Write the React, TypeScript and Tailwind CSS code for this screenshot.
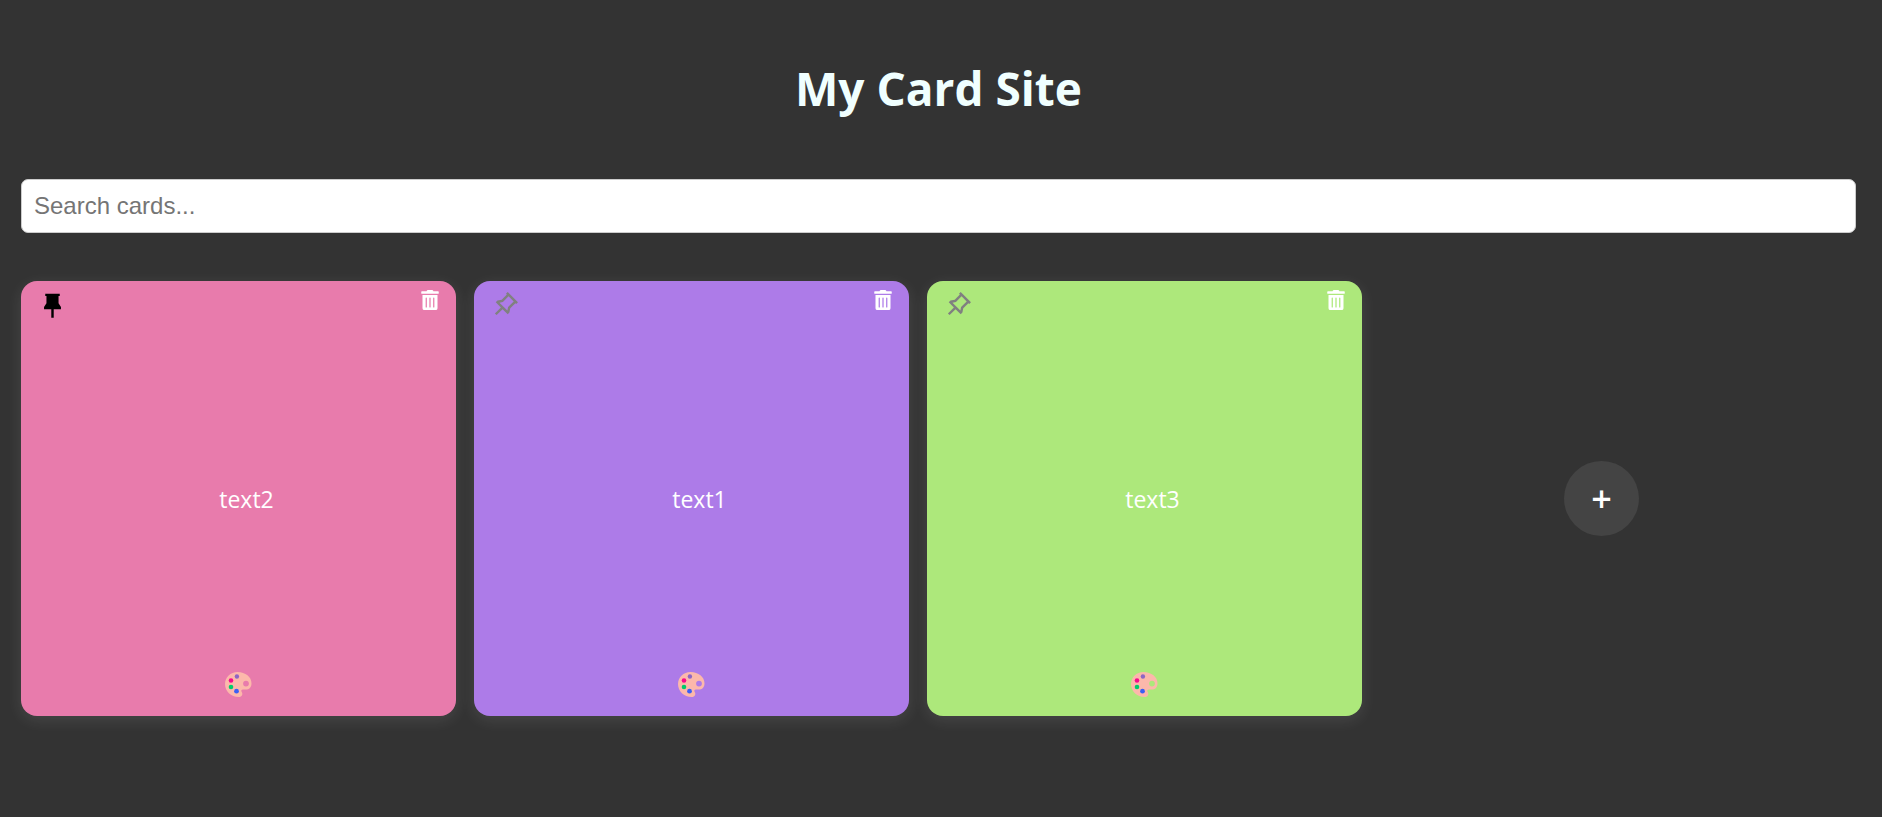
import { FaTrashAlt } from "react-icons/fa";
import { RiPushpin2Fill, RiPushpinLine } from "react-icons/ri";

type Card = { id: number; text: string; color: string; pinned: boolean };

const cards: Card[] = [
  { id: 2, text: "text2", color: "bg-[#e87bac]", pinned: true },
  { id: 1, text: "text1", color: "bg-[#ad7be8]", pinned: false },
  { id: 3, text: "text3", color: "bg-[#ade87b]", pinned: false },
];

function Palette() {
  return (
    <svg viewBox="0 0 30 30" className="size-[30px]" aria-hidden="true">
      <path
        fill="#fcb8ab"
        fillRule="evenodd"
        d="M14.5 2C22.5 2 28.500 7 28.500 13.200C28.500 17.300 26.300 19.600 22.600 19.600H20C18.300 19.600 17.900 20.800 18.700 22C20.200 24.300 19 27 15.800 27C7.800 27 2 21 2 14C2 7 7.500 2 14.500 2ZM23 10.700a2.900 2.900 0 1 0 0 5.800a2.900 2.900 0 1 0 0-5.800Z"
      />
      <circle cx="13.900" cy="6.500" r="2.200" fill="#8d65c5" />
      <circle cx="8" cy="10.500" r="2.300" fill="#f70a8d" />
      <circle cx="8" cy="17" r="2.300" fill="#00cc6a" />
      <circle cx="13.500" cy="21.200" r="2.400" fill="#3b5ff5" />
    </svg>
  );
}

function CardTile({ card }: { card: Card }) {
  return (
    <article
      className={`flex aspect-square flex-col rounded-2xl text-white shadow-[0_4px_16px_rgba(255,255,255,0.1)] ${card.color}`}
    >
      <div className="flex h-12 items-start justify-between pt-[9px] pr-4 pl-[17px]">
        <button
          type="button"
          aria-label={card.pinned ? "Unpin card" : "Pin card"}
          className={card.pinned ? "text-black" : "text-[#808080]"}
        >
          {card.pinned ? <RiPushpin2Fill size={29} /> : <RiPushpinLine size={29} />}
        </button>
        <button type="button" aria-label="Delete card">
          <FaTrashAlt size={20} />
        </button>
      </div>
      <p className="flex flex-1 items-center justify-center pl-4 text-[23px]">{card.text}</p>
      <div className="flex h-[46px] items-start justify-center pr-0.5">
        <button type="button" aria-label="Change colour">
          <Palette />
        </button>
      </div>
    </article>
  );
}

export default function App() {
  return (
    <main className="min-h-screen bg-[#333333] pl-[21px] font-['Open_Sans','Noto_Sans',sans-serif]">
      <header className="pr-[26px]">
        <h1 className="pt-14 text-center text-[46px] leading-[64px] font-bold text-[#f0ffff]">
          My Card Site
        </h1>
        <input
          type="search"
          aria-label="Search cards"
          placeholder="Search cards..."
          className="mt-[59px] block h-[54px] w-full rounded-[7px] border border-[#cccccc] bg-white px-3 font-['Liberation_Sans',Arial,sans-serif] text-2xl text-black placeholder:text-[#757575]"
        />
      </header>
      <section className="mt-12 grid grid-cols-4 gap-[18px] pr-[67px]">
        {cards.map((card) => (
          <CardTile key={card.id} card={card} />
        ))}
        <div className="flex items-center justify-center pl-2">
          <button
            type="button"
            aria-label="Add card"
            className="flex size-[75px] items-center justify-center rounded-full bg-[#444444] text-white"
          >
            <span className="text-4xl leading-none font-semibold">+</span>
          </button>
        </div>
      </section>
    </main>
  );
}
